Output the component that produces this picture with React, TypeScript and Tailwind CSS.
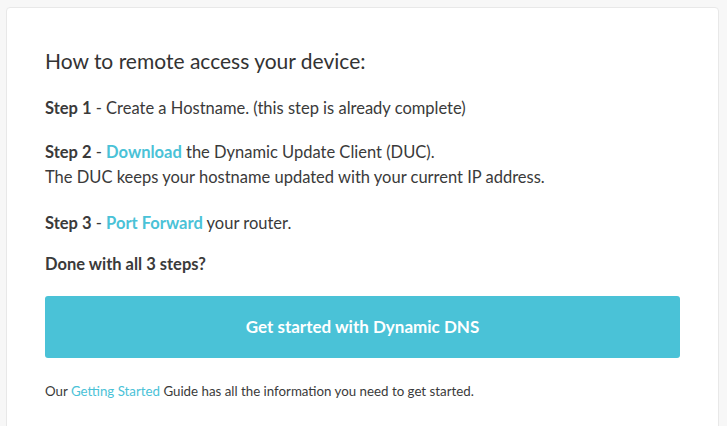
export default function App() {
  return (
    <div className="min-h-screen bg-[#f7f7f7] pt-[7px] pl-[6px] pr-[8px] overflow-hidden" style={{ fontFamily: "Lato, 'Noto Sans', sans-serif" }}>
      <section className="h-[440px] bg-white border border-[#e8e8e8] rounded-[4px] px-[38px] pt-[38px] text-[#3a3a3a]">
        <h2 className="text-[21px] leading-[30px] font-normal text-[#333]">How to remote access your device:</h2>
        <p className="mt-[20px] text-[16.5px] leading-[25px]">
          <span className="font-bold">Step 1</span> - Create a Hostname. (this step is already complete)
        </p>
        <p className="mt-[19px] text-[16.5px] leading-[25px]">
          <span className="font-bold">Step 2</span> - <a className="font-bold text-[#4ac2d7] cursor-pointer">Download</a> the Dynamic Update Client (DUC).
          <br />
          The DUC keeps your hostname updated with your current IP address.
        </p>
        <p className="mt-[21px] text-[16.5px] leading-[25px]">
          <span className="font-bold">Step 3</span> - <a className="font-bold text-[#4ac2d7] cursor-pointer">Port Forward</a> your router.
        </p>
        <p className="mt-[16px] text-[16.5px] leading-[25px] font-bold">Done with all 3 steps?</p>
        <button className="mt-[19px] w-full h-[62px] rounded-[3px] bg-[#4ac2d7] text-white text-[17px] font-bold">
          Get started with Dynamic DNS
        </button>
        <p className="mt-[23px] text-[13.3px] leading-[20px]">
          Our <a className="text-[#4ac2d7] cursor-pointer">Getting Started</a> Guide has all the information you need to get started.
        </p>
      </section>
    </div>
  );
}
